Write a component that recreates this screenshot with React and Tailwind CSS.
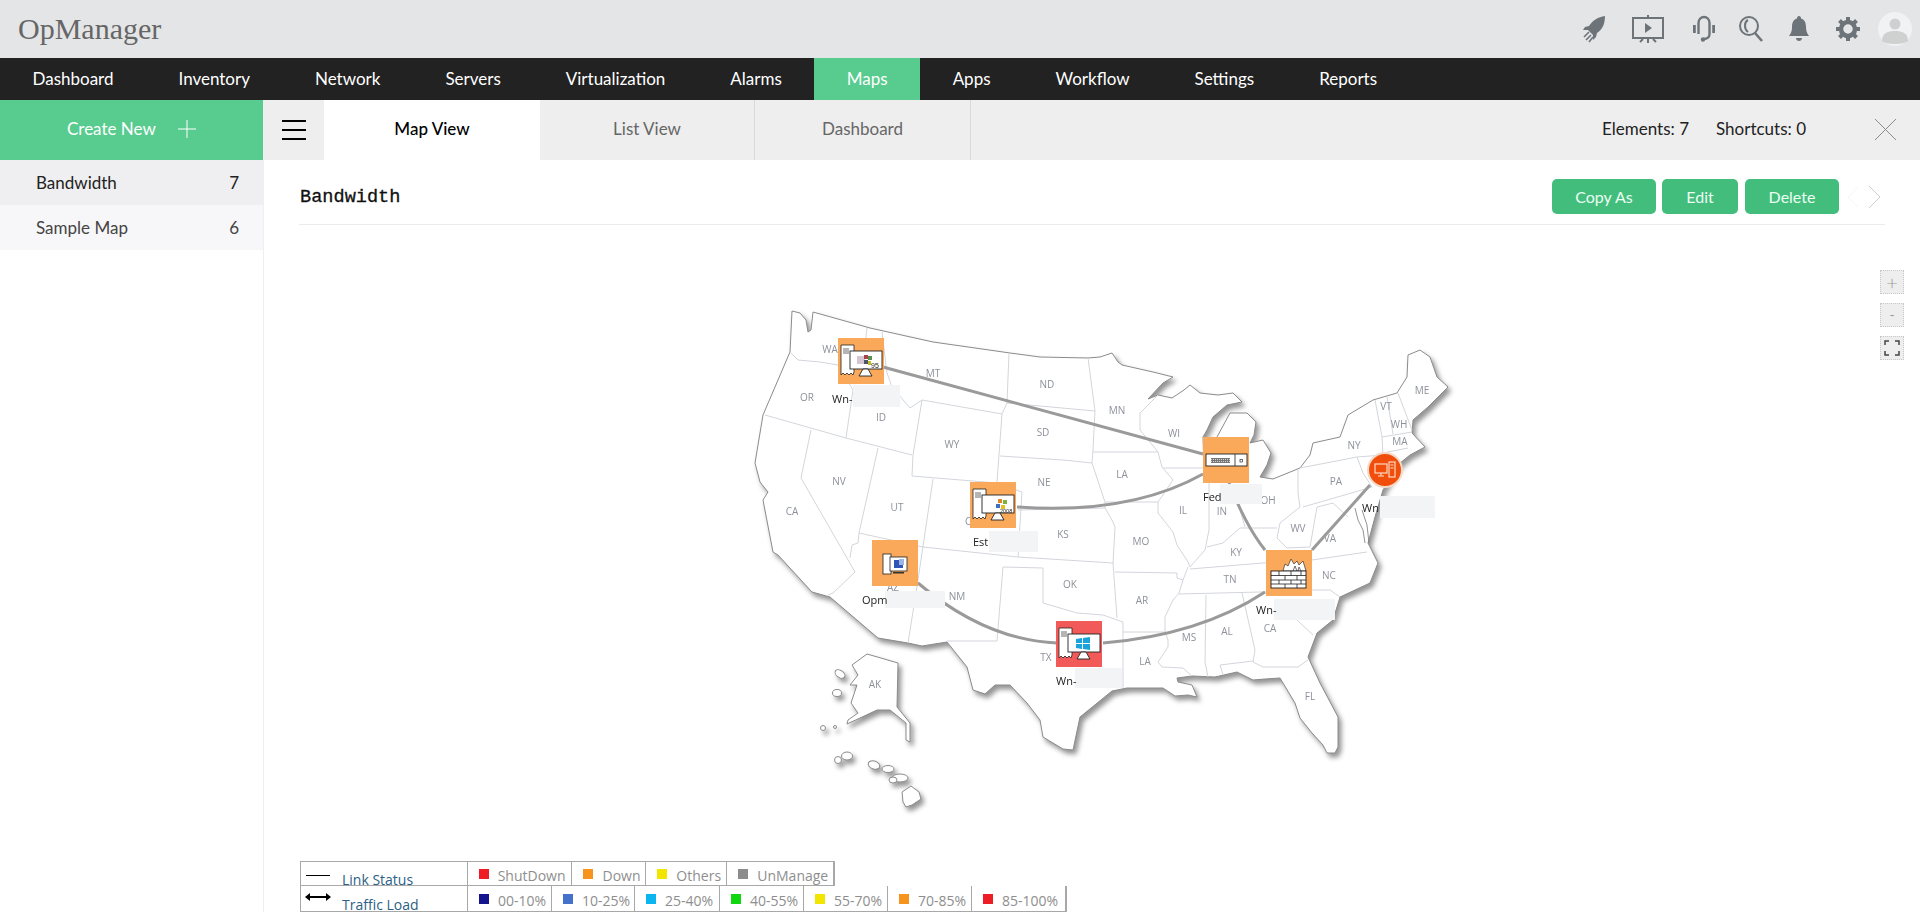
import React from "react";

const navItems = ["Dashboard", "Inventory", "Network", "Servers", "Virtualization", "Alarms", "Maps", "Apps", "Workflow", "Settings", "Reports"];

// map outline, in page coordinates
const usaOutline =
  "792,311 800,313 806,320 808,332 811,330 813,312 870,328 933,342 1010,353 1040,357 1088,358 1100,357 1112,353 1118,362 1122,365 1153,372 1173,377 1163,383 1148,399 1158,395 1172,398 1184,390 1190,385 1200,393 1218,395 1233,393 1242,402 1227,405 1213,417 1207,430 1203,437 1204,470 1210,480 1214,450 1217,437 1230,413 1247,413 1256,422 1254,435 1250,443 1263,440 1271,453 1267,465 1260,477 1273,479 1300,468 1310,455 1313,443 1340,437 1348,415 1373,400 1397,393 1407,377 1408,355 1420,350 1430,357 1437,377 1448,387 1428,407 1413,420 1412,433 1425,447 1410,455 1400,463 1383,490 1375,517 1368,543 1378,563 1370,583 1340,597 1333,620 1317,633 1308,657 1320,683 1338,717 1338,747 1335,753 1327,753 1323,745 1312,733 1300,718 1295,703 1280,678 1265,679 1253,680 1237,672 1215,677 1192,676 1177,678 1178,682 1192,685 1197,697 1188,695 1175,696 1163,688 1127,688 1112,691 1080,717 1073,750 1063,749 1043,737 1040,720 1027,703 1010,685 995,685 985,694 973,690 967,667 947,642 922,646 908,643 878,638 830,597 812,592 778,555 773,552 763,500 768,492 760,482 755,463 763,415 790,352";

const alaskaOutline =
  "852,665 867,654 898,663 897,707 910,723 910,742 906,740 906,723 890,710 877,710 860,718 847,724 848,720 858,713 851,703 857,685 850,685 858,675";

// state borders
const borders = [
  "790,352 798,360 820,362 838,365 853,390 846,438",
  "867,328 865,345",
  "882,332 887,373 892,387 910,408 922,400 1002,414",
  "1009,353 1007,403 1002,414 997,482",
  "1007,403 1095,411",
  "1088,358 1095,411 1093,450 1092,463",
  "1000,456 1063,460 1092,463 1105,502 1105,508 1112,520 1115,527 1113,563 1117,618",
  "922,400 913,455 912,476 997,483 1022,492 1018,557",
  "933,479 918,580 908,643",
  "765,415 846,438 912,455",
  "878,448 859,533 858,543 852,545 850,558",
  "811,430 801,478 855,572 833,593 828,595",
  "859,533 923,547 1018,557 1113,563",
  "1018,510 1105,508",
  "1003,567 1043,568 1043,603 1077,613 1103,615 1123,622 1123,688",
  "1003,567 997,641 947,641",
  "1093,452 1158,452 1162,467 1173,480 1158,502 1105,502",
  "1158,395 1140,413 1140,430 1158,452",
  "1163,468 1203,468",
  "1158,502 1158,513 1173,532 1177,545 1188,562 1190,567 1205,550 1209,530 1209,483",
  "1115,572 1177,573 1177,578 1183,580 1188,567",
  "1183,580 1179,593 1173,600 1165,617 1165,632 1168,640 1168,647 1158,662 1162,667 1183,668 1192,676",
  "1207,547 1223,543 1240,528 1250,528 1277,528",
  "1238,503 1245,527",
  "1190,569 1263,563 1312,560 1367,552",
  "1179,594 1260,592 1312,590 1330,590 1340,597",
  "1298,470 1298,493 1300,507 1280,523 1277,538 1287,548 1310,547 1317,507 1333,503 1348,517",
  "1300,468 1357,457 1363,473 1372,487 1303,507",
  "1375,400 1382,437 1383,455 1357,457",
  "1398,393 1412,430",
  "1387,397 1393,434",
  "1382,437 1412,432",
  "1383,453 1408,448",
  "1297,620 1313,635",
  "1242,593 1255,650 1253,662 1263,667 1298,667 1308,660",
  "1220,665 1253,661",
  "1220,665 1223,675",
  "1206,595 1205,662 1208,677",
  "1123,632 1165,632",
];

const stateLabels = [
  ["WA", 830, 350], ["OR", 807, 398], ["ID", 881, 418], ["MT", 933, 374], ["ND", 1047, 385], ["SD", 1043, 433],
  ["WY", 952, 445], ["NE", 1044, 483], ["NV", 839, 482], ["UT", 897, 508], ["CA", 792, 512], ["KS", 1063, 535],
  ["CO", 972, 522], ["AZ", 893, 588], ["OK", 1070, 585], ["NM", 957, 597], ["AR", 1142, 601], ["TN", 1230, 580],
  ["MS", 1189, 638], ["AL", 1227, 632], ["CA", 1270, 629], ["LA", 1145, 662], ["TX", 1046, 658], ["AK", 875, 685],
  ["FL", 1310, 697], ["MO", 1141, 542], ["IL", 1183, 511], ["IN", 1222, 512], ["KY", 1236, 553], ["LA", 1122, 475],
  ["MN", 1117, 411], ["WI", 1174, 434], ["OH", 1268, 501], ["WV", 1298, 529], ["VA", 1330, 539], ["NC", 1329, 576],
  ["NY", 1354, 446], ["PA", 1336, 482], ["VT", 1386, 407], ["WH", 1399, 425], ["MA", 1400, 442], ["ME", 1422, 391],
];

const statusRow = [
  { name: "ShutDown", color: "bg-[#ee1c25]", width: "w-[105px]" },
  { name: "Down", color: "bg-[#f7941e]", width: "w-[74px]" },
  { name: "Others", color: "bg-[#f2e600]", width: "w-[81px]" },
  { name: "UnManage", color: "bg-[#8c8c8c]", width: "w-[107px]" },
];

const loadRow = [
  { name: "00-10%", color: "bg-[#14148c]", width: "w-[84px]" },
  { name: "10-25%", color: "bg-[#4472ca]", width: "w-[83px]" },
  { name: "25-40%", color: "bg-[#0cb4f0]", width: "w-[85px]" },
  { name: "40-55%", color: "bg-[#0fd80f]", width: "w-[84px]" },
  { name: "55-70%", color: "bg-[#f2e600]", width: "w-[84px]" },
  { name: "70-85%", color: "bg-[#f7941e]", width: "w-[84px]" },
  { name: "85-100%", color: "bg-[#ee1c25]", width: "w-[94px]" },
];

const RocketIcon = () => (
  <svg width="26" height="28" viewBox="0 0 26 28" fill="#6d7479">
    <path d="M24 1 C17 2 12 5 8 11 L4 12 L2 15 L7 15 L12 20 L12 25 L15 22 L16 18 C22 14 24 8 24 1 Z" />
    <path d="M3 22 L8 17 M5 25 L10 20 M8 27 L12 22" stroke="#6d7479" strokeWidth="1.6" fill="none" />
  </svg>
);

const ScreenIcon = () => (
  <svg width="34" height="30" viewBox="0 0 34 30" fill="none" stroke="#6d7479" strokeWidth="2">
    <rect x="2" y="4" width="30" height="20" />
    <path d="M17 1 V4 M17 24 V29 M12 25 L9 28 M22 25 L25 28" />
    <path d="M14 9 L21 14 L14 19 Z" fill="#6d7479" stroke="none" />
  </svg>
);

const HeadsetIcon = () => (
  <svg width="24" height="28" viewBox="0 0 24 28" fill="none" stroke="#6d7479" strokeWidth="2.400">
    <path d="M6.500 19 V8 C6.500 0 17.500 0 17.500 8 V19 C17.500 22 15 24 12 24" />
    <circle cx="11" cy="24.500" r="2.200" fill="#6d7479" stroke="none" />
    <rect x="1" y="10" width="2.800" height="8" fill="#6d7479" stroke="none" />
    <rect x="20.200" y="10" width="2.800" height="8" fill="#6d7479" stroke="none" />
  </svg>
);

const SearchIcon = () => (
  <svg width="26" height="28" viewBox="0 0 26 28" fill="none" stroke="#6d7479" strokeWidth="2">
    <circle cx="11" cy="11" r="9" />
    <path d="M10 5 C6 7 6 14 10 17" />
    <path d="M17 18 L24 26" strokeWidth="2.6" />
  </svg>
);

const BellIcon = () => (
  <svg width="22" height="26" viewBox="0 0 22 26" fill="#6d7479">
    <path d="M11 0 C12.3 0 13 1 13 2.4 C17 3.6 18 7 18 11 C18 15 19 17 21 20 L1 20 C3 17 4 15 4 11 C4 7 5 3.6 9 2.4 C9 1 9.700 0 11 0 Z" />
    <path d="M8 22 H14 C14 26 8 26 8 22 Z" />
  </svg>
);

const GearIcon = () => (
  <svg width="26" height="26" viewBox="0 0 26 26" fill="none" stroke="#6d7479">
    <circle cx="13" cy="13" r="7" strokeWidth="4.500" />
    <path d="M13 1 V6 M13 20 V25 M1 13 H6 M20 13 H25 M4.500 4.500 L8 8 M18 18 L21.500 21.500 M21.500 4.500 L18 8 M8 18 L4.500 21.500" strokeWidth="4" />
  </svg>
);

const AvatarIcon = () => (
  <svg width="34" height="34" viewBox="0 0 34 34">
    <circle cx="17" cy="17" r="17" fill="#f1f2f3" />
    <circle cx="17" cy="12" r="5.500" fill="#cfd0d0" />
    <path d="M4 29 C4 21 10 19 17 19 C24 19 30 21 30 29 C26 33 8 33 4 29 Z" fill="#cfd0d0" />
  </svg>
);

const ServerMonitor = ({ children, small }) =>
  small ? (
    <svg width="46" height="46" viewBox="0 0 46 46">
      <rect x="11" y="14" width="8" height="20" fill="#fff" stroke="#222" strokeWidth="0.8" />
      <rect x="18" y="17" width="17" height="14" fill="#fff" stroke="#222" strokeWidth="0.8" />
      <rect x="21" y="32" width="11" height="1.500" fill="#333" />
      {children}
    </svg>
  ) : (
    <svg width="46" height="46" viewBox="0 0 46 46">
      <path d="M3 7 H16 V34 L15 37 L13 35 L11 37 L9 35 L7 37 L5 35 L3 37 Z" fill="#fff" stroke="#222" strokeWidth="0.8" />
      <path d="M5 11 H11 M5 13 H11 M5 15 H11" stroke="#444" strokeWidth="0.8" />
      <rect x="12" y="13" width="32" height="18" fill="#fff" stroke="#222" strokeWidth="0.9" />
      <path d="M25 31 H30 L34 38 H21 Z" fill="#fff" stroke="#222" strokeWidth="0.9" />
      {children}
    </svg>
  );

const Win95Logo = () => (
  <g>
    <rect x="19" y="18" width="8" height="8" fill="#c9b6c4" opacity="0.8" />
    <rect x="26" y="17" width="4" height="4" fill="#a8414a" />
    <rect x="30" y="18" width="4" height="4" fill="#5b8f4f" />
    <rect x="26" y="22" width="4" height="4" fill="#4a5568" />
    <rect x="30" y="23" width="3" height="4" fill="#c8b91e" />
    <text x="33" y="29.500" fontSize="7" fontFamily="Liberation Sans, sans-serif" fill="#222">95</text>
  </g>
);

const Win2008Logo = () => (
  <g>
    <rect x="28" y="17" width="4" height="4" fill="#e0862a" />
    <rect x="33" y="18" width="4" height="4" fill="#7fb13c" />
    <rect x="26" y="22" width="4" height="4" fill="#3f6fc4" />
    <rect x="31" y="23" width="4" height="4" fill="#e3c21e" />
    <text x="30" y="31" fontSize="5.500" fontFamily="Liberation Sans, sans-serif" fill="#222">2008</text>
  </g>
);

const SwitchIcon = () => (
  <svg width="46" height="46" viewBox="0 0 46 46">
    <rect x="3" y="17" width="41" height="12" fill="#fff" stroke="#222" strokeWidth="0.9" />
    <path d="M32 17 V29" stroke="#222" strokeWidth="0.8" />
    <rect x="8" y="21" width="19" height="5" fill="#777" />
    <path d="M8 22.500 H27 M8 24.500 H27" stroke="#eee" strokeWidth="0.8" strokeDasharray="1 1" />
    <rect x="37" y="22.500" width="2.500" height="2.500" fill="none" stroke="#333" strokeWidth="0.7" />
  </svg>
);

const FirewallIcon = () => (
  <svg width="46" height="46" viewBox="0 0 46 46">
    <path d="M17 21 L19 14 L22 16 L25 9 L28 14 L31 11 L33 15 L37 11 L40 21 Z" fill="#fff" stroke="#333" strokeWidth="0.7" />
    <path d="M27 21 L29 16 L31 21 M32 21 L33 17 L35 21" fill="none" stroke="#333" strokeWidth="0.7" />
    <rect x="5" y="21" width="35" height="17" fill="#fff" stroke="#222" strokeWidth="0.9" />
    <path d="M5 25.500 H40 M5 30 H40 M5 34 H40" stroke="#222" strokeWidth="0.8" />
    <path d="M13 21 V25.500 M25 21 V25.500 M35 21 V25.500 M19 25.500 V30 M31 25.500 V30 M13 30 V34 M25 30 V34 M35 30 V34 M19 34 V38 M31 34 V38" stroke="#222" strokeWidth="0.8" />
  </svg>
);

const NodeLabel = ({ text, className, boxClass }) => (
  <>
    <div className={`absolute bg-[#f3f4f6] ${boxClass}`} />
    <span className={`absolute font-['Open_Sans',sans-serif] text-[11px] leading-none text-[#222] ${className}`}>{text}</span>
  </>
);

const UsaMap = () => (
  <div className="relative h-[637px] w-full">
    <svg className="absolute left-0 top-0" width="1656" height="637" viewBox="264 225 1656 637">
      <g className="drop-shadow-[3px_4px_2.5px_rgba(0,0,0,0.42)]">
        <polygon points={usaOutline} fill="#fff" stroke="#8b8b8b" strokeWidth="1" strokeLinejoin="round" />
        <polygon points={alaskaOutline} fill="#fff" stroke="#8b8b8b" strokeWidth="1" strokeLinejoin="round" />
        <ellipse cx="840" cy="674" rx="5.500" ry="3.500" transform="rotate(35 840 674)" fill="#fff" stroke="#8b8b8b" />
        <ellipse cx="837" cy="693" rx="4.500" ry="3.500" fill="#fff" stroke="#8b8b8b" />
        <ellipse cx="823" cy="728" rx="2.500" ry="2.500" fill="#fff" stroke="#8b8b8b" />
        <ellipse cx="835" cy="727" rx="1.500" ry="1.500" fill="#fff" stroke="#8b8b8b" />
        <ellipse cx="847" cy="756" rx="5.500" ry="4" fill="#fff" stroke="#8b8b8b" />
        <ellipse cx="838" cy="760" rx="3.500" ry="3.500" fill="#fff" stroke="#8b8b8b" />
        <ellipse cx="874" cy="765" rx="6" ry="4" transform="rotate(20 874 765)" fill="#fff" stroke="#8b8b8b" />
        <ellipse cx="888" cy="769" rx="6" ry="3.500" fill="#fff" stroke="#8b8b8b" />
        <ellipse cx="900" cy="778" rx="8" ry="4" fill="#fff" stroke="#8b8b8b" />
        <ellipse cx="893" cy="780" rx="4" ry="3" fill="#fff" stroke="#8b8b8b" />
        <path d="M902 792 L911 786 L919 792 L921 799 L912 805 L906 807 L903 802 Z" fill="#fff" stroke="#8b8b8b" />
      </g>
      {borders.map((points, i) => (
        <polyline key={i} points={points} fill="none" stroke="#d2d5db" strokeWidth="1" strokeLinejoin="round" />
      ))}
      <path d="M1355 508 L1358 520 L1363 530 L1365 543 M1362 510 L1367 525 L1369 543" fill="none" stroke="#777" strokeWidth="0.8" />
      {stateLabels.map(([name, x, y], i) => (
        <text key={i} x={x} y={y + 3} textAnchor="middle" fontSize="10" fontFamily="Open Sans, sans-serif" fill="#8d919a">
          {name}
        </text>
      ))}
      <g fill="none" stroke="#9a9a9a" strokeWidth="3">
        <path d="M883 367 L1203 454" />
        <path d="M1017 507 Q1130 515 1203 474" />
        <path d="M1228 480 Q1245 525 1265 550" />
        <path d="M1312 550 L1370 485" />
        <path d="M1103 643 Q1200 635 1265 592" />
        <path d="M918 583 Q985 640 1057 643" />
      </g>
    </svg>

    {/* map nodes */}
    <div className="absolute left-[574px] top-[113px] h-[46px] w-[46px] bg-[#f9a959]">
      <ServerMonitor>
        <Win95Logo />
      </ServerMonitor>
      <NodeLabel text="Wn-" className="-left-[6px] top-[55px]" boxClass="left-[15px] top-[47px] h-[22px] w-[47px]" />
    </div>
    <div className="absolute left-[706px] top-[257px] h-[46px] w-[46px] bg-[#f9a959]">
      <ServerMonitor>
        <Win2008Logo />
      </ServerMonitor>
      <NodeLabel text="Est" className="left-[3px] top-[54px]" boxClass="left-[19px] top-[49px] h-[21px] w-[49px]" />
    </div>
    <div className="absolute left-[608px] top-[315px] h-[46px] w-[46px] bg-[#f9a959]">
      <ServerMonitor small>
        <rect x="22" y="20" width="9" height="8" fill="#2f55b5" />
        <rect x="27" y="19" width="5" height="6" fill="#9db4e6" />
      </ServerMonitor>
      <NodeLabel text="Opm" className="-left-[10px] top-[54px]" boxClass="left-[13px] top-[51px] h-[17px] w-[60px]" />
    </div>
    <div className="absolute left-[792px] top-[396px] h-[46px] w-[46px] bg-[#f25a5a]">
      <ServerMonitor>
        <path d="M20 18 L26 17 V22 H20 Z M27 17 L34 16 V22 H27 Z M20 23 H26 V28 L20 27 Z M27 23 H34 V29 L27 28 Z" fill="#1ba3dd" />
      </ServerMonitor>
      <NodeLabel text="Wn-" className="left-[0px] top-[54px]" boxClass="left-[19px] top-[47px] h-[20px] w-[47px]" />
    </div>
    <div className="absolute left-[939px] top-[212px] h-[46px] w-[46px] bg-[#f9a959]">
      <SwitchIcon />
      <NodeLabel text="Fed" className="left-[0px] top-[54px]" boxClass="left-[17px] top-[47px] h-[20px] w-[42px]" />
    </div>
    <div className="absolute left-[1002px] top-[325px] h-[46px] w-[46px] bg-[#f9a959]">
      <FirewallIcon />
      <NodeLabel text="Wn-" className="-left-[10px] top-[54px]" boxClass="left-[8px] top-[49px] h-[21px] w-[61px]" />
    </div>
    <div className="absolute left-[1103px] top-[227px] flex h-[36px] w-[36px] items-center justify-center rounded-full border-2 border-[#f3d9c8] bg-[#f04e0a]">
      <svg width="22" height="18" viewBox="0 0 22 18" fill="none" stroke="#ffd9c4" strokeWidth="1.200">
        <rect x="1" y="3" width="12" height="9" />
        <path d="M4 15 H10 M7 12 V15" />
        <rect x="15" y="1" width="6" height="15" />
        <path d="M16.500 4 H19.500 M16.500 7 H19.500" />
      </svg>
      <NodeLabel text="Wn" className="-left-[7px] top-[48px]" boxClass="left-[11px] top-[42px] h-[22px] w-[55px]" />
    </div>

    {/* zoom controls */}
    <div className="absolute left-[1616px] top-[45px] flex flex-col gap-[9px]">
      <div className="flex h-[24px] w-[24px] items-center justify-center border border-dotted border-[#c8c8c8] bg-[#eeeeee] text-[20px] font-light leading-none text-[#999]">+</div>
      <div className="flex h-[24px] w-[24px] items-center justify-center border border-dotted border-[#c8c8c8] bg-[#eeeeee] text-[14px] leading-none text-[#999]">-</div>
      <div className="flex h-[24px] w-[24px] items-center justify-center border border-dotted border-[#c8c8c8] bg-[#eeeeee]">
        <svg width="16" height="16" viewBox="0 0 16 16" fill="none" stroke="#444" strokeWidth="1.500">
          <path d="M1 5 V1 H5 M11 1 H15 V5 M1 11 V15 H5 M11 15 H15 V11" />
        </svg>
      </div>
    </div>
  </div>
);

const LegendCell = ({ item }) => (
  <div className={`flex h-full items-center border-r border-[#a8a8a8] pl-[11px] text-[14px] text-[#8e8e8e] ${item.width}`}>
    <span className={`mr-[9px] h-[10px] w-[10px] ${item.color}`} />
    <span className="pt-[4px]">{item.name}</span>
  </div>
);

const Legend = () => (
  <div className="ml-[36px] font-['Open_Sans',sans-serif]">
    <div className="flex h-[25px] w-[535px] border border-[#a8a8a8]">
      <div className="flex h-full w-[167px] items-center border-r border-[#a8a8a8] pl-[5px] text-[14px] text-[#2b5f86]">
        <span className="mr-[12px] mt-[3px] h-px w-[24px] bg-black" />
        <span className="mt-[4px] pt-[7px]">Link Status</span>
      </div>
      {statusRow.map((item) => (
        <LegendCell key={item.name} item={item} />
      ))}
    </div>
    <div className="flex h-[26px] w-[767px] border border-t-0 border-[#a8a8a8]">
      <div className="flex h-full w-[167px] items-center border-r border-[#a8a8a8] pl-[5px] text-[14px] text-[#2b5f86]">
        <span className="relative mb-[3px] mr-[12px] h-[2px] w-[24px] bg-black">
          <span className="absolute -left-[1px] -top-[3px] h-0 w-0 border-y-[4px] border-r-[5px] border-y-transparent border-r-black" />
          <span className="absolute -right-[1px] -top-[3px] h-0 w-0 border-y-[4px] border-l-[5px] border-y-transparent border-l-black" />
        </span>
        <span className="mt-[4px] pt-[7px]">Traffic Load</span>
      </div>
      {loadRow.map((item) => (
        <LegendCell key={item.name} item={item} />
      ))}
    </div>
  </div>
);

export default function App() {
  return (
    <div className="flex h-[912px] flex-col overflow-hidden bg-white font-['Lato',sans-serif]">
      <header className="flex h-[58px] items-center bg-[#e4e5e6] pl-[18px] pr-[8px]">
        <span className="font-['Liberation_Serif',serif] text-[30px] leading-none text-[#666]">OpManager</span>
        <div className="ml-auto flex items-center">
          <RocketIcon />
          <span className="ml-[24px]"><ScreenIcon /></span>
          <span className="ml-[27px]"><HeadsetIcon /></span>
          <span className="ml-[22px]"><SearchIcon /></span>
          <span className="ml-[24px]"><BellIcon /></span>
          <span className="ml-[25px]"><GearIcon /></span>
          <span className="ml-[17px]"><AvatarIcon /></span>
        </div>
      </header>

      <nav className="flex h-[42px] bg-[#222222] text-[17px] text-white">
        {navItems.map((item) => (
          <div key={item} className={`flex items-center px-[32.5px] ${item === "Maps" ? "bg-[#58cb8e]" : ""}`}>
            {item}
          </div>
        ))}
      </nav>

      <div className="flex min-h-0 flex-1">
        <aside className="w-[264px] shrink-0 border-r border-[#efefef] text-[17px]">
          <div className="flex h-[60px] items-center bg-[#58cb8e] pb-[2px] pl-[67px] text-white">
            Create New
            <svg className="ml-[21px]" width="20" height="20" viewBox="0 0 20 20" stroke="#fff" strokeWidth="1">
              <path d="M10 1 V19 M1 10 H19" />
            </svg>
          </div>
          <div className="flex h-[45px] items-center justify-between bg-[#efeff1] pl-[36px] pr-[24px] text-[#222]">
            <span>Bandwidth</span>
            <span>7</span>
          </div>
          <div className="flex h-[45px] items-center justify-between bg-[#f7f7f9] pl-[36px] pr-[24px] text-[#444]">
            <span>Sample Map</span>
            <span>6</span>
          </div>
        </aside>

        <main className="flex min-w-0 flex-1 flex-col">
          <div className="flex h-[60px] items-center bg-[#eeeeee] text-[17px]">
            <div className="flex h-full w-[60px] flex-col items-center justify-center gap-[7px]">
              <span className="h-[2px] w-[24px] bg-black" />
              <span className="h-[2px] w-[24px] bg-black" />
              <span className="h-[2px] w-[24px] bg-black" />
            </div>
            <div className="flex h-full w-[216px] items-center justify-center bg-white pb-[2px] font-medium text-black">Map View</div>
            <div className="flex h-full w-[215px] items-center justify-center border-r border-[#d8d8d8] pb-[2px] text-[#666]">List View</div>
            <div className="flex h-full w-[216px] items-center justify-center border-r border-[#d8d8d8] pb-[2px] text-[#666]">Dashboard</div>
            <span className="ml-auto pb-[2px] text-[#222]">Elements: 7</span>
            <span className="ml-[27px] pb-[2px] text-[#222]">Shortcuts: 0</span>
            <svg className="ml-[68px] mr-[23px]" width="23" height="23" viewBox="0 0 23 23" stroke="#8a8a8a" strokeWidth="1">
              <path d="M1 1 L22 22 M22 1 L1 22" />
            </svg>
          </div>

          <div className="mx-[35px] flex h-[65px] items-center border-b border-[#ececec] pt-[10px]">
            <h1 className="ml-[1px] mt-[3px] font-['Liberation_Mono',monospace] text-[18.600px] font-normal text-[#111] [-webkit-text-stroke:0.3px_#111]">Bandwidth</h1>
            <div className="ml-auto flex items-center text-[16px] text-[#eafff3]">
              <button className="h-[35px] w-[104px] rounded-[5px] bg-[#43bd7c]">Copy As</button>
              <button className="ml-[6px] h-[35px] w-[76px] rounded-[5px] bg-[#43bd7c]">Edit</button>
              <button className="ml-[7px] h-[35px] w-[94px] rounded-[5px] bg-[#43bd7c]">Delete</button>
              <svg className="ml-[8px] mr-[4px]" width="34" height="24" viewBox="0 0 34 24" fill="none" strokeWidth="1">
                <path d="M11 2 L1 12 L11 22" stroke="#f5f5f5" />
                <path d="M22 1 L33 12 L22 23" stroke="#cccccc" />
              </svg>
            </div>
          </div>

          <UsaMap />
          <Legend />
        </main>
      </div>
    </div>
  );
}
